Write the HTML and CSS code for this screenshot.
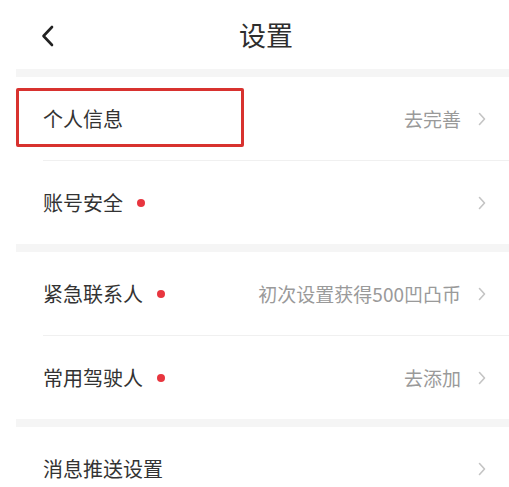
FILE: index.html
```html
<!DOCTYPE html>
<html lang="zh-CN">
<head>
<meta charset="utf-8">
<title>设置</title>
<link rel="stylesheet" href="styles.css">
</head>
<body>
<div class="screen">
  <header class="header">
    <div class="back">
      <svg width="14" height="22" viewBox="0 0 14 22"><path d="M11 2 L2.5 11 L11 20" fill="none" stroke="#222" stroke-width="2.6" stroke-linecap="round" stroke-linejoin="round"/></svg>
    </div>
    <h1 class="title">设置</h1>
    <div class="spacer"></div>
  </header>

  <div class="band"></div>
  <section class="group">
    <div class="row">
      <span class="label">个人信息</span>
      <span class="value">去完善</span>
      <svg class="chev" width="8" height="14" viewBox="0 0 8 14"><path d="M1.5 1.5 L6.5 7 L1.5 12.5" fill="none" stroke="#c4c4c4" stroke-width="1.6" stroke-linecap="round" stroke-linejoin="round"/></svg>
      <div class="highlight"></div>
    </div>
    <div class="divider"></div>
    <div class="row">
      <span class="label">账号安全</span>
      <span class="dot"></span>
      <span class="value"></span>
      <svg class="chev" width="8" height="14" viewBox="0 0 8 14"><path d="M1.5 1.5 L6.5 7 L1.5 12.5" fill="none" stroke="#c4c4c4" stroke-width="1.6" stroke-linecap="round" stroke-linejoin="round"/></svg>
    </div>
  </section>

  <div class="band"></div>
  <section class="group">
    <div class="row">
      <span class="label">紧急联系人</span>
      <span class="dot"></span>
      <span class="value">初次设置获得500凹凸币</span>
      <svg class="chev" width="8" height="14" viewBox="0 0 8 14"><path d="M1.5 1.5 L6.5 7 L1.5 12.5" fill="none" stroke="#c4c4c4" stroke-width="1.6" stroke-linecap="round" stroke-linejoin="round"/></svg>
    </div>
    <div class="divider"></div>
    <div class="row">
      <span class="label">常用驾驶人</span>
      <span class="dot"></span>
      <span class="value">去添加</span>
      <svg class="chev" width="8" height="14" viewBox="0 0 8 14"><path d="M1.5 1.5 L6.5 7 L1.5 12.5" fill="none" stroke="#c4c4c4" stroke-width="1.6" stroke-linecap="round" stroke-linejoin="round"/></svg>
    </div>
  </section>

  <div class="band"></div>
  <section class="group">
    <div class="row">
      <span class="label">消息推送设置</span>
      <span class="value"></span>
      <svg class="chev" width="8" height="14" viewBox="0 0 8 14"><path d="M1.5 1.5 L6.5 7 L1.5 12.5" fill="none" stroke="#c4c4c4" stroke-width="1.6" stroke-linecap="round" stroke-linejoin="round"/></svg>
    </div>
  </section>
</div>
</body>
</html>
```

FILE: styles.css
```css
html, body {
  margin: 0;
  padding: 0;
  background: #ffffff;
  overflow: hidden;
}

body {
  font-family: "Noto Sans CJK SC", "Noto Sans", sans-serif;
  color: #333333;
}

.screen {
  margin-left: 16px;
  width: 500px;
}

.header {
  height: 69px;
  display: grid;
  grid-template-columns: 1fr auto 1fr;
  align-items: center;
}

.back {
  padding-left: 25px;
  display: flex;
  align-items: center;
  padding-top: 2px;
}

.title {
  margin: 0;
  font-size: 27px;
  font-weight: 400;
  color: #2e2e2e;
  line-height: 1;
}

.band {
  height: 8px;
  background: #f5f5f5;
}

.row {
  position: relative;
  height: 83px;
  display: flex;
  align-items: center;
  padding-left: 27px;
  padding-right: 30px;
}

.label {
  font-size: 20px;
  color: #333333;
  line-height: 1;
}

.dot {
  width: 8px;
  height: 8px;
  border-radius: 50%;
  background: #e8363f;
  margin-left: 14px;
}

.value {
  margin-left: auto;
  font-size: 19px;
  color: #9a9a9a;
  line-height: 1;
}

.chev {
  margin-left: 17px;
  flex: none;
}

.divider {
  height: 1px;
  margin-left: 27px;
  background: #f0f0f0;
}

.highlight {
  position: absolute;
  left: 0;
  top: 11px;
  width: 228px;
  height: 59px;
  box-sizing: border-box;
  border: 3px solid #d8322f;
  border-radius: 2px;
}
```
